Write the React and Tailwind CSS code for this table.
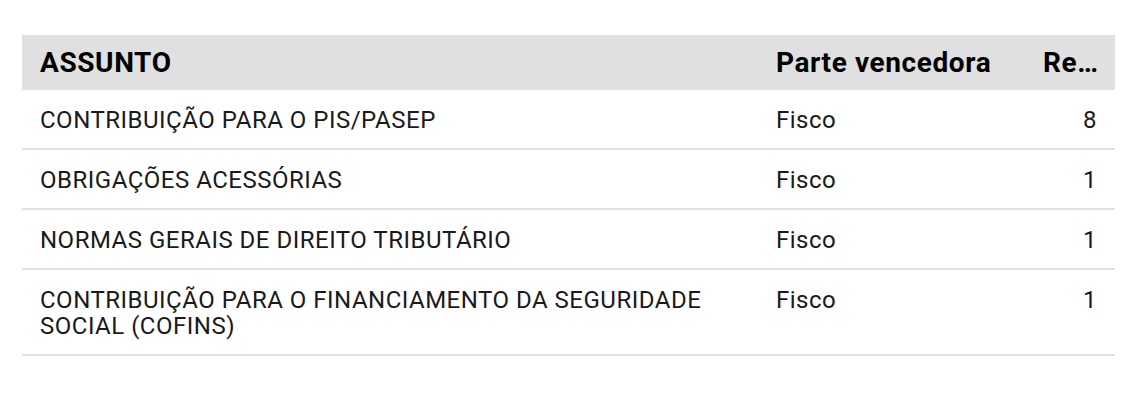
const rows = [
  { assunto: 'CONTRIBUIÇÃO PARA O PIS/PASEP', parte: 'Fisco', qtd: 8 },
  { assunto: 'OBRIGAÇÕES ACESSÓRIAS', parte: 'Fisco', qtd: 1 },
  { assunto: 'NORMAS GERAIS DE DIREITO TRIBUTÁRIO', parte: 'Fisco', qtd: 1 },
  { assunto: 'CONTRIBUIÇÃO PARA O FINANCIAMENTO DA SEGURIDADE SOCIAL (COFINS)', parte: 'Fisco', qtd: 1 },
];

export default function App() {
  return (
    <div className="w-[1135px] h-[400px] bg-white pt-[35px] px-[22px] font-['Roboto',sans-serif] text-[#1a1a1a]">
      <table className="w-[1093px] table-fixed border-collapse">
        <colgroup>
          <col className="w-[736px]" />
          <col className="w-[267px]" />
          <col className="w-[90px]" />
        </colgroup>
        <thead>
          <tr className="bg-[#e0e0e0] h-[55px] text-[28px] font-bold text-black tracking-[0.6px] leading-[32px]">
            <th className="px-[18px] text-left">ASSUNTO</th>
            <th className="px-[18px] text-left">Parte vencedora</th>
            <th className="pl-[18px] pr-[16px] text-left truncate">Recorrências</th>
          </tr>
        </thead>
        <tbody>
          {rows.map((r, i) => (
            <tr key={i} className="border-b-2 border-[#e0e0e0] align-top text-[24px] leading-[26px] tracking-[0.5px]">
              <td className="px-[18px] pt-[17px] pb-[15px]">{r.assunto}</td>
              <td className="px-[18px] pt-[17px] pb-[15px]">{r.parte}</td>
              <td className="px-[18px] pt-[17px] pb-[15px] text-right">{r.qtd}</td>
            </tr>
          ))}
        </tbody>
      </table>
    </div>
  );
}
